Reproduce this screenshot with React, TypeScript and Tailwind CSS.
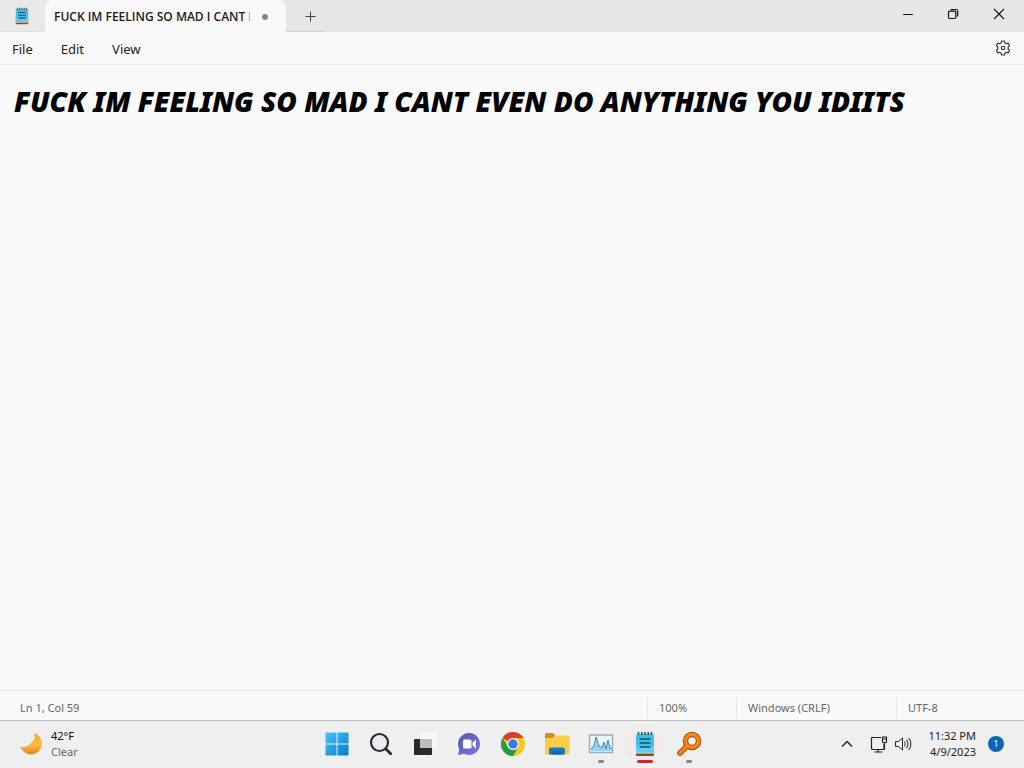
import type { ReactNode } from "react";

const NOTE = "FUCK IM FEELING SO MAD I CANT EVEN DO ANYTHING YOU IDIITS";

function NotepadIcon({ className }: { className: string }) {
  return (
    <svg className={className} viewBox="0 0 20 26" aria-hidden="true">
      <rect x="1" y="20" width="18" height="5" rx="1" fill="#8a4b16" />
      <rect x="1" y="21" width="18" height="1.5" fill="#f3eee4" />
      <path d="M2.500 3h15A1.500 1.500 0 0 1 19 4.500V21.500H1V4.500A1.500 1.500 0 0 1 2.500 3z" fill="#43bfe4" />
      <path d="M1 15h18v6.500H1z" fill="#62cdec" />
      <path d="M3.500 1v3M6.800 1v3M10 1v3M13.200 1v3M16.500 1v3" stroke="#1a5068" strokeWidth="1.500" />
      <path d="M4.500 8h11M4.500 12h11M4.500 16h11" stroke="#11566f" strokeWidth="1.600" />
    </svg>
  );
}

function TitleBar() {
  return (
    <header className="flex h-8 shrink-0 items-stretch bg-[#e6e6e6]">
      <div className="flex w-[45px] items-center justify-center rounded-br-md border-b border-[#dedede] bg-[#e9e9e9] pr-0.5">
        <NotepadIcon className="h-[18px] w-4" />
      </div>
      <div className="flex w-[241px] items-center rounded-t-lg bg-[#f9f9f9] pt-0.5 pl-[9px]">
        <span className="w-[196px] overflow-hidden font-['Open_Sans','Noto_Sans',sans-serif] text-[12px] leading-4 font-semibold whitespace-nowrap">{NOTE}</span>
        <span className="ml-3 size-1.5 rounded-full bg-[#868686]" />
      </div>
      <button aria-label="New tab" className="flex w-[39px] items-center justify-center border-b border-[#cfcfcf] pl-2">
        <svg className="size-3" viewBox="0 0 12 12" stroke="#444" aria-hidden="true">
          <path d="M6.500 1.500v10M1.500 6.500h10" />
        </svg>
      </button>
      <div className="flex-1" />
      <div className="flex items-center pr-px pb-1">
        <button aria-label="Minimize" className="flex h-full w-[45px] items-center justify-center">
          <svg className="size-3" viewBox="0 0 12 12" stroke="#111" aria-hidden="true"><path d="M1 6.500h10" /></svg>
        </button>
        <button aria-label="Restore" className="flex h-full w-[45px] items-center justify-center">
          <svg className="size-3" viewBox="0 0 12 12" fill="none" stroke="#111" strokeWidth="1.200" aria-hidden="true">
            <rect x="1.500" y="3.200" width="7.300" height="7.300" rx="1.200" />
            <path d="M3.500 1.500H9a1.700 1.700 0 0 1 1.700 1.700v5.300" />
          </svg>
        </button>
        <button aria-label="Close" className="flex h-full w-12 items-center justify-center">
          <svg className="size-3" viewBox="0 0 12 12" stroke="#111" strokeWidth="1.100" aria-hidden="true"><path d="M1 1l10 10M11 1L1 11" /></svg>
        </button>
      </div>
    </header>
  );
}

function MenuBar() {
  return (
    <nav className="flex h-[33px] shrink-0 items-center border-b border-[#e9e9e9] bg-[#f9f9f9] px-3 text-[13px] leading-5 text-[#222]">
      <div className="flex flex-1 gap-7 pt-0.5">
        <button>File</button>
        <button>Edit</button>
        <button>View</button>
      </div>
      <button aria-label="Settings" className="pr-px">
        <svg className="size-4" viewBox="0 0 16 16" fill="none" stroke="#333" strokeWidth="1.100" strokeLinejoin="round" aria-hidden="true">
          <path d="M6.600 1h2.800l.5 2a5 5 0 0 1 1.300.75l2-.6 1.400 2.400-1.500 1.450v2l1.500 1.450-1.400 2.400-2-.6a5 5 0 0 1-1.300.75l-.5 2H6.600l-.5-2a5 5 0 0 1-1.300-.75l-2 .6-1.400-2.400L2.900 9V7L1.400 5.550l1.400-2.400 2 .6A5 5 0 0 1 6.100 3z" />
          <circle cx="8" cy="8" r="1.700" />
        </svg>
      </button>
    </nav>
  );
}

function StatusBar() {
  return (
    <footer className="flex h-[30px] shrink-0 items-center border-t border-[#e8e8e8] bg-[#f9f9f9] pt-1 text-[11px] leading-4 text-[#666]">
      <span className="flex-1 pl-5">Ln 1, Col 59</span>
      <span className="flex h-5 w-[89px] items-center border-l border-[#e5e5e5] pl-[11px]">100%</span>
      <span className="flex h-5 w-40 items-center border-l border-[#e5e5e5] pl-[11px]">Windows (CRLF)</span>
      <span className="flex h-5 w-32 items-center border-l border-[#e5e5e5] pl-[11px]">UTF-8</span>
    </footer>
  );
}

function TaskButton({ label, mark, children }: { label: string; mark?: "open" | "alert"; children: ReactNode }) {
  return (
    <button
      aria-label={label}
      className={`flex h-full w-11 flex-col items-center pt-2.5 ${mark === "alert" ? "bg-radial from-[#ffdede] to-[#efefef] to-70%" : ""}`}
    >
      <span className="flex size-[26px] items-center justify-center">{children}</span>
      {mark === "open" && <span className="mt-[3px] h-[3px] w-1.5 rounded-full bg-[#858585]" />}
      {mark === "alert" && <span className="mt-[3px] h-[3px] w-4 rounded-full bg-[#c42b2b]" />}
    </button>
  );
}

function Taskbar() {
  return (
    <footer className="grid h-12 shrink-0 grid-cols-[1fr_auto_1fr] border-t border-[#bdbdbd] bg-[#efefef]">
      <button className="flex items-center gap-2 pb-0.5 pl-[19px] text-left text-[11px] leading-4">
        <svg className="size-6" viewBox="0 0 24 24" aria-hidden="true">
          <defs>
            <linearGradient id="moon" x1="0" y1="0" x2="0" y2="1">
              <stop stopColor="#f3a62c" />
              <stop offset="0.550" stopColor="#f9bd43" />
              <stop offset="1" stopColor="#e98323" />
            </linearGradient>
          </defs>
          <path d="M15 1c9 3 10 14 4 19C13 25 4 22 1 14.500c3 1 6 .5 8-1 3-1.500 3-3.500 5-4.500 2-2 2-5 1-8z" fill="url(#moon)" />
        </svg>
        <span>
          <span className="block text-[#111]">42°F</span>
          <span className="block text-[#666]">Clear</span>
        </span>
      </button>
      <div className="flex pl-0.5">
        <TaskButton label="Start">
          <svg className="size-6" viewBox="0 0 24 24" aria-hidden="true">
            <defs>
              <linearGradient id="win" x1="0" y1="0" x2="1" y2="1">
                <stop stopColor="#47c5f7" />
                <stop offset="1" stopColor="#0878d1" />
              </linearGradient>
            </defs>
            <path d="M.5.500h11v11H.5zM12.500.500h11v11h-11zM.5 12.500h11v11H.5zM12.500 12.500h11v11h-11z" fill="url(#win)" />
          </svg>
        </TaskButton>
        <TaskButton label="Search">
          <svg className="size-6" viewBox="0 0 24 24" fill="none" stroke="#2a2a2a" aria-hidden="true">
            <circle cx="10.500" cy="10.500" r="8.500" strokeWidth="2.200" fill="#e9edef" />
            <path d="M16.700 16.700l5 5" strokeWidth="2.800" strokeLinecap="round" />
          </svg>
        </TaskButton>
        <TaskButton label="Task view">
          <svg className="size-[26px]" viewBox="0 0 26 26" aria-hidden="true">
            <rect x="8" y="2" width="17" height="14" rx="1" fill="#f7f7f7" />
            <rect x="2" y="8" width="18" height="16" rx="1" fill="#292929" />
            <path d="M8 8h12v9H8z" fill="#bebebe" />
          </svg>
        </TaskButton>
        <TaskButton label="Chat">
          <svg className="size-6" viewBox="0 0 24 24" aria-hidden="true">
            <defs>
              <linearGradient id="chat" x1="0" y1="0" x2="1" y2="1">
                <stop stopColor="#5558af" />
                <stop offset="1" stopColor="#7b75de" />
              </linearGradient>
            </defs>
            <path d="M12 1a11 11 0 1 1-5 20.800L1 23l1.300-5.800A11 11 0 0 1 12 1z" fill="url(#chat)" />
            <rect x="6" y="7.500" width="8.500" height="9" rx="1.500" fill="#fff" />
            <path d="M15.500 10.500l3.500-3v9l-3.500-3z" fill="#fff" />
          </svg>
        </TaskButton>
        <TaskButton label="Chrome">
          <svg className="size-6" viewBox="0 0 24 24" aria-hidden="true">
            <circle cx="12" cy="12" r="12" fill="#f9c51d" />
            <path d="M12 12L1.600 6A12 12 0 0 1 22.400 6H12z" fill="#df3c30" />
            <path d="M1.600 6A12 12 0 0 0 12 24l5.200-9-5.200 3-5.200-3z" fill="#259b48" />
            <circle cx="12" cy="12" r="6" fill="#fff" />
            <circle cx="12" cy="12" r="4.700" fill="#397be3" />
          </svg>
        </TaskButton>
        <TaskButton label="File Explorer">
          <svg className="size-[26px]" viewBox="0 0 26 26" aria-hidden="true">
            <path d="M1 3.500A1.500 1.500 0 0 1 2.500 2h6.500l2 2.500h13A1.500 1.500 0 0 1 25.500 6v16a1.500 1.500 0 0 1-1.500 1.500H2.500A1.500 1.500 0 0 1 1 22z" fill="#f8cd4a" />
            <path d="M1 3.500A1.500 1.500 0 0 1 2.500 2h6.500l2 2.500L8.500 7H1z" fill="#c9921d" />
            <path d="M5 23.500v-5a2 2 0 0 1 2-2h12a2 2 0 0 1 2 2v5z" fill="#167ac5" />
            <path d="M8 20.500h10v3H8z" fill="#0863a8" />
          </svg>
        </TaskButton>
        <TaskButton label="Performance Monitor" mark="open">
          <svg className="size-[26px]" viewBox="0 0 26 26" aria-hidden="true">
            <rect x="1.500" y="4" width="23" height="17.500" fill="#e9f6fc" stroke="#9bafbc" strokeWidth="1.500" />
            <path d="M3 20v-3l3-3 2-8 3 8 3 3 2-6 2 7 2-8 3 8v2z" fill="#9bd2ef" />
            <path d="M3 18l3-3 2-9 3 9 3 2 2-6 2 7 2-9 2 8 2 1" fill="none" stroke="#438ab5" />
          </svg>
        </TaskButton>
        <TaskButton label="Notepad" mark="alert"><NotepadIcon className="h-[26px] w-5" /></TaskButton>
        <TaskButton label="Key tool" mark="open">
          <svg className="size-[26px]" viewBox="0 0 26 26" fill="none" aria-hidden="true">
            <g stroke="#a04c08" strokeLinecap="round">
              <circle cx="16" cy="10" r="6.500" strokeWidth="5.500" />
              <path d="M11 15l-7 7" strokeWidth="5.500" />
            </g>
            <g stroke="#f58519" strokeLinecap="round">
              <circle cx="16" cy="10" r="6.500" strokeWidth="3.500" />
              <path d="M11 15l-7 7" strokeWidth="3.500" />
            </g>
          </svg>
        </TaskButton>
      </div>
      <div className="flex items-center justify-end pr-5 pb-0.5 text-[11px] leading-4 text-[#222]">
        <button aria-label="Show hidden icons" className="mr-[17px]">
          <svg className="size-3" viewBox="0 0 12 12" fill="none" stroke="#222" strokeWidth="1.400" aria-hidden="true"><path d="M1 8.500l5-5 5 5" /></svg>
        </button>
        <button aria-label="Network and volume" className="mr-4 flex items-center gap-1.5">
          <svg className="size-[18px]" viewBox="0 0 18 18" fill="none" stroke="#222" strokeWidth="1.200" aria-hidden="true">
            <path d="M11 2.500H2.500a1 1 0 0 0-1 1v10a1 1 0 0 0 1 1H14V9M8 14.500V17M4.500 17h8" />
            <path d="M12.500 2h4v4.500a1 1 0 0 1-1 1h-2a1 1 0 0 1-1-1zM12.500 4h4M14.500 7.500v7" />
          </svg>
          <svg className="size-[18px]" viewBox="0 0 18 18" fill="none" stroke="#222" aria-hidden="true">
            <path d="M1.500 6.500h3l4-3.500v12l-4-3.500h-3z" />
            <path d="M10.500 6.500q1.800 2.500 0 5M12.700 4.700q3 4.300 0 8.600M14.800 3q4.200 6 0 12" />
          </svg>
        </button>
        <button className="text-right">
          <span className="block">11:32 PM</span>
          <span className="block">4/9/2023</span>
        </button>
        <button aria-label="1 notification" className="ml-3 flex size-4 items-center justify-center rounded-full bg-[#0867b8] text-[9px] text-white">1</button>
      </div>
    </footer>
  );
}

export default function App() {
  return (
    <div className="flex h-dvh flex-col overflow-hidden bg-[#f9f9f9] font-['Noto_Sans','Open_Sans',sans-serif] text-[#1b1b1b]">
      <TitleBar />
      <MenuBar />
      <main className="flex flex-1">
        <textarea
          aria-label="Text editor"
          spellCheck={false}
          defaultValue={NOTE}
          className="flex-1 resize-none bg-[#f9f9f9] px-3.5 pt-[18px] text-[28px] leading-9 font-black text-black italic outline-none"
        />
      </main>
      <StatusBar />
      <Taskbar />
    </div>
  );
}
